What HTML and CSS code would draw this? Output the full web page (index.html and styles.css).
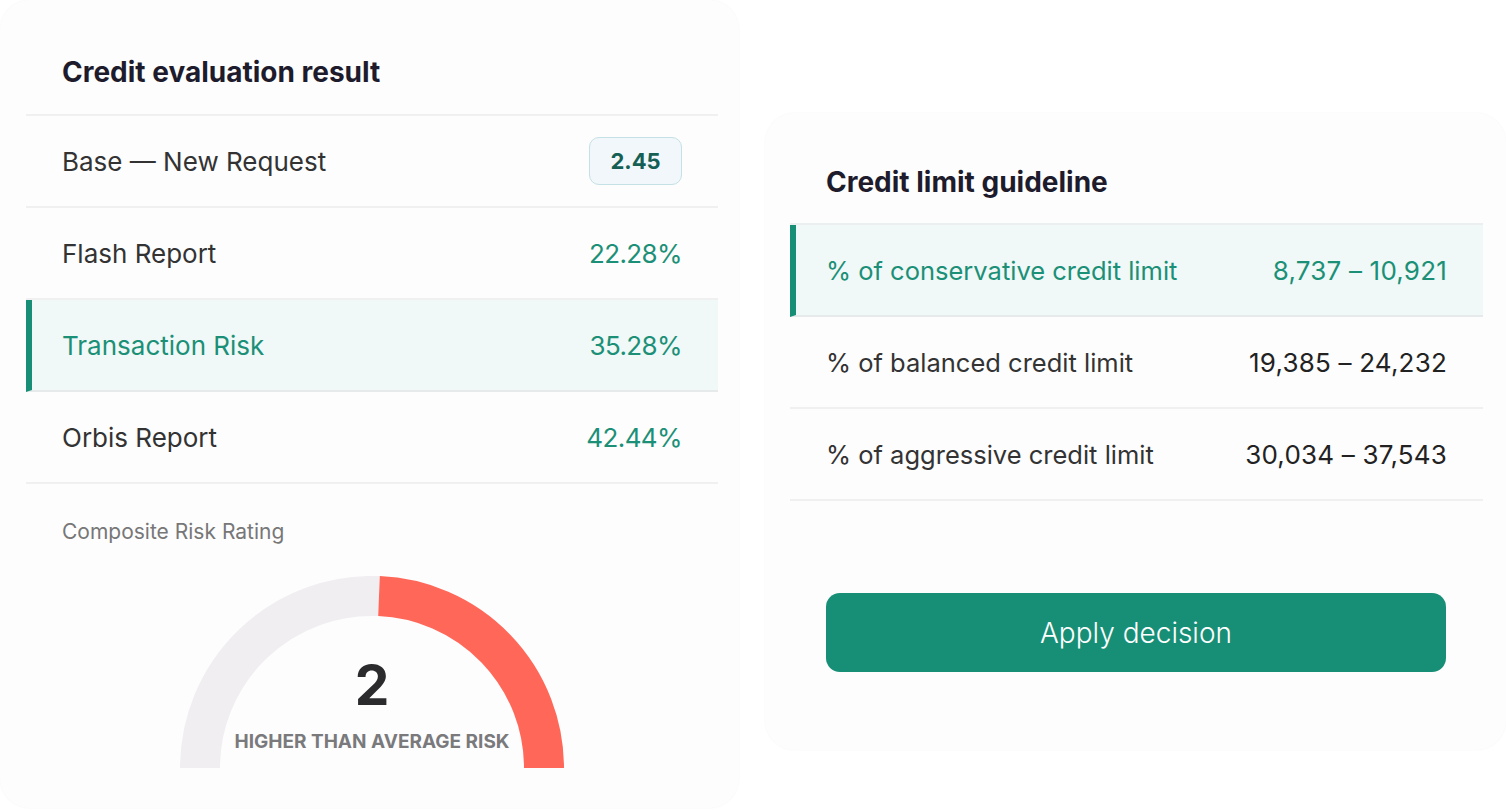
FILE: index.html
```html
<!DOCTYPE html>
<html lang="en">
<head>
    <meta charset="UTF-8">
    <title>Credit evaluation</title>
    <link rel="stylesheet" href="styles.css">
</head>
<body>
    <div class="page">
        <div class="card card-eval">
            <h2 class="card-title">Credit evaluation result</h2>
            <div class="rows">
                <div class="row">
                    <span class="row-label">Base — New Request</span>
                    <span class="badge">2.45</span>
                </div>
                <div class="row">
                    <span class="row-label">Flash Report</span>
                    <span class="row-value">22.28%</span>
                </div>
                <div class="row active">
                    <span class="row-label">Transaction Risk</span>
                    <span class="row-value">35.28%</span>
                </div>
                <div class="row">
                    <span class="row-label">Orbis Report</span>
                    <span class="row-value">42.44%</span>
                </div>
            </div>
            <div class="rating-label">Composite Risk Rating</div>
            <div class="gauge">
                <svg width="384" height="194" viewBox="0 0 384 194">
                    <path d="M20 192 A172 172 0 0 1 199 20.1" fill="none" stroke="#f0eef1" stroke-width="40"/>
                    <path d="M199 20.1 A172 172 0 0 1 364 192" fill="none" stroke="#ff6859" stroke-width="40"/>
                </svg>
                <div class="gauge-score">2</div>
                <div class="gauge-caption">HIGHER THAN AVERAGE RISK</div>
            </div>
        </div>

        <div class="card card-limit">
            <h2 class="card-title">Credit limit guideline</h2>
            <div class="rows">
                <div class="row active">
                    <span class="row-label">% of conservative credit limit</span>
                    <span class="row-value range">8,737 – 10,921</span>
                </div>
                <div class="row">
                    <span class="row-label">% of balanced credit limit</span>
                    <span class="row-value range dark">19,385 – 24,232</span>
                </div>
                <div class="row">
                    <span class="row-label">% of aggressive credit limit</span>
                    <span class="row-value range dark">30,034 – 37,543</span>
                </div>
            </div>
            <button type="button" class="btn">Apply decision</button>
        </div>
    </div>
</body>
</html>
```

FILE: styles.css
```css
body {
    margin: 0;
    background: #ffffff;
    font-family: Inter, "Noto Sans", sans-serif;
    color: #333333;
}
.page {
    display: flex;
    align-items: flex-start;
    gap: 26px;
    width: 1506px;
    height: 810px;
    overflow: hidden;
}
.card {
    background: #fdfdfe;
    border-radius: 30px;
    box-shadow: 0 0 2px rgba(0, 0, 0, 0.05);
    box-sizing: border-box;
}
.card-eval {
    width: 739px;
    height: 808px;
    padding: 0 21px 0 26px;
}
.card-limit {
    width: 741px;
    height: 637px;
    margin-top: 113px;
    padding: 0 23px 0 25px;
}
.card-title {
    margin: 0;
    padding: 0 36px;
    font-size: 28px;
    font-weight: 700;
    color: #1e1c2c;
    line-height: 32px;
}
.card-eval .card-title {
    padding-top: 56px;
    padding-bottom: 26px;
}
.card-limit .card-title {
    padding-top: 53px;
    padding-bottom: 25px;
}
.rows {
    border-top: 2px solid #f0f0f1;
}
.card-limit .rows {
    border-top-color: #eceff0;
}
.row {
    display: flex;
    align-items: center;
    justify-content: space-between;
    height: 90px;
    padding: 0 36px;
    border-bottom: 2px solid #f0f0f1;
    font-size: 26px;
}
.card-limit .row {
    font-size: 25.5px;
}
.row.active {
    background: #f0f8f8;
    border-left: 6px solid #178f77;
    padding-left: 30px;
    border-bottom-color: #e6eaeb;
}
.row.active .row-label {
    color: #1b9077;
}
.row-label {
    color: #333333;
}
.row-value {
    color: #1b9077;
    font-size: 26px;
    letter-spacing: -0.6px;
}
.row-value.range {
    letter-spacing: 0.2px;
}
.row-value.dark {
    color: #222222;
}
.badge {
    display: inline-block;
    width: 91px;
    height: 46px;
    line-height: 46px;
    text-align: center;
    border: 1px solid #c4e1e5;
    border-radius: 10px;
    background: #f1f7fa;
    color: #155f55;
    font-size: 22px;
    font-weight: 700;
}
.rating-label {
    padding: 36px 36px 0;
    font-size: 21px;
    color: #777777;
    line-height: 24px;
}
.gauge {
    position: relative;
    width: 384px;
    height: 194px;
    margin: 32px 0 0 154px;
}
.gauge svg {
    display: block;
}
.gauge-score {
    position: absolute;
    left: 0;
    right: 0;
    top: 76px;
    text-align: center;
    font-size: 55px;
    font-weight: 700;
    color: #2b2b2e;
}
.gauge-caption {
    position: absolute;
    left: 0;
    right: 0;
    top: 154px;
    text-align: center;
    font-size: 19px;
    font-weight: 700;
    color: #7a7a7c;
}
.btn {
    display: block;
    width: 620px;
    height: 79px;
    margin: 92px 0 0 36px;
    background: #178f77;
    color: #ffffff;
    border: none;
    border-radius: 14px;
    font-family: Inter, "Noto Sans", sans-serif;
    font-size: 28px;
    font-weight: 300;
    cursor: pointer;
}
```
